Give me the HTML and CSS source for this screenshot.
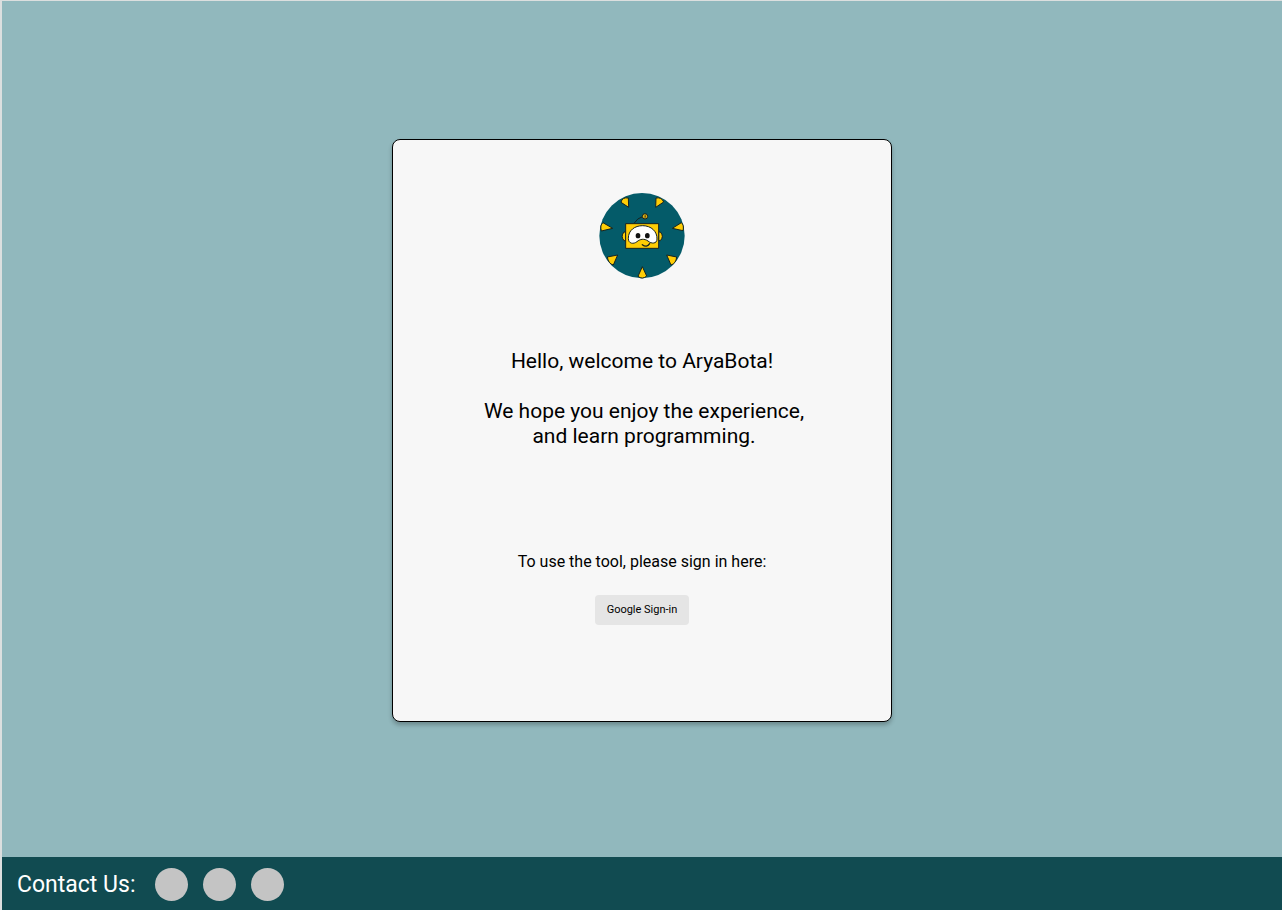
FILE: index.html
```html
<!DOCTYPE html>
<html lang="en">
<head>
<meta charset="utf-8">
<title>AryaBota</title>
<link rel="stylesheet" href="styles.css">
</head>
<body>
<main class="stage">
  <section class="card">
    <svg class="logo" viewBox="21 21 258 258" role="img" aria-label="AryaBota">
      <circle cx="150" cy="149" r="128" fill="#045b69"/>
      <g fill="#ffcd05" stroke="#17221f" stroke-width="3" stroke-linejoin="round">
        <path d="M109 36L110 64L87 49Q90 33 109 36Z"/>
        <path d="M192 36L191 64L215 48Q209 33 192 36Z"/>
        <path d="M33 110L62 127L28 135Q23 117 33 110Z"/>
        <path d="M268 110L241 127L273 134Q277 117 268 110Z"/>
        <path d="M46 213L77 207L64 237Q49 233 46 213Z"/>
        <path d="M254 213L224 207L237 237Q252 233 254 213Z"/>
        <path d="M151 242L164 270Q151 282 138 271Z"/>
        <path d="M101 138H96Q85 151 96 164H101Z"/>
        <path d="M200 138H205Q217 151 205 164H200Z"/>
        <path d="M101 113H200V187H101Z"/>
      </g>
      <path d="M127 111Q136 96 152 92" fill="none" stroke="#17221f" stroke-width="3"/>
      <circle cx="159" cy="91" r="8" fill="#e5b510" stroke="#17221f" stroke-width="3"/>
      <path d="M161 86L158 91H161L158 97" fill="none" stroke="#17221f" stroke-width="2"/>
      <path d="M109 157C109 133 128 119 152 119C178 119 196 137 195 159C195 174 178 174 168 165C157 157 144 159 135 167C125 175 109 174 109 157Z" fill="#fff" stroke="#17221f" stroke-width="3"/>
      <ellipse cx="138" cy="149" rx="7" ry="8" fill="#111"/>
      <ellipse cx="166" cy="149" rx="7" ry="8" fill="#111"/>
      <path d="M151 176Q164 186 173 173" fill="none" stroke="#17221f" stroke-width="4" stroke-linecap="round"/>
    </svg>
    <h1 class="greeting">Hello, welcome to AryaBota!</h1>
    <p class="message">We hope you enjoy the experience,<br>and learn programming.</p>
    <p class="prompt">To use the tool, please sign in here:</p>
    <button class="sign-in" type="button">Google Sign-in</button>
  </section>
</main>
<footer class="contact">
  <span class="contact-label">Contact Us:</span>
  <span class="dot"></span>
  <span class="dot"></span>
  <span class="dot"></span>
</footer>
</body>
</html>
```
FILE: styles.css
```css
* {
  box-sizing: border-box;
}

body {
  margin: 0;
  min-height: 100vh;
  display: flex;
  flex-direction: column;
  border-top: 1px solid #dcdfdf;
  border-left: 2px solid #dcdfdf;
  background: #91b8bd;
  color: #000;
  font-family: Roboto, "Liberation Sans", sans-serif;
}

.stage {
  flex: 1;
  display: flex;
  flex-direction: column;
  align-items: center;
  padding: 138px 16px 135px;
}

.card {
  width: 100%;
  max-width: 500px;
  display: flex;
  flex-direction: column;
  align-items: center;
  padding: 53px 24px 96px;
  border: 1px solid #000;
  border-radius: 8px;
  background: #f7f7f7;
  box-shadow: 0 3px 4px rgba(0, 0, 0, 0.25);
  text-align: center;
}

.logo {
  width: 86px;
  height: 86px;
}

.greeting,
.message {
  margin: 0;
  font-size: 21px;
  font-weight: 400;
  line-height: 25px;
}

.greeting {
  margin-top: 70px;
}

.message {
  margin-top: 25px;
  padding-left: 4px;
}

.prompt {
  margin: 103px 0 23px;
  font-size: 16px;
  line-height: 20px;
}

.sign-in {
  padding: 8px 12px;
  border: 0;
  border-radius: 4px;
  background: #e5e5e5;
  color: #000;
  font-family: inherit;
  font-size: 11px;
  line-height: 14px;
}

.contact {
  display: flex;
  align-items: center;
  gap: 15px;
  padding: 11px 15px 9px;
  background: #114b51;
  color: #fff;
}

.contact-label {
  margin-right: 5px;
  font-size: 23px;
  line-height: 28px;
}

.dot {
  width: 33px;
  height: 33px;
  border-radius: 50%;
  background: #c4c4c4;
}
```
